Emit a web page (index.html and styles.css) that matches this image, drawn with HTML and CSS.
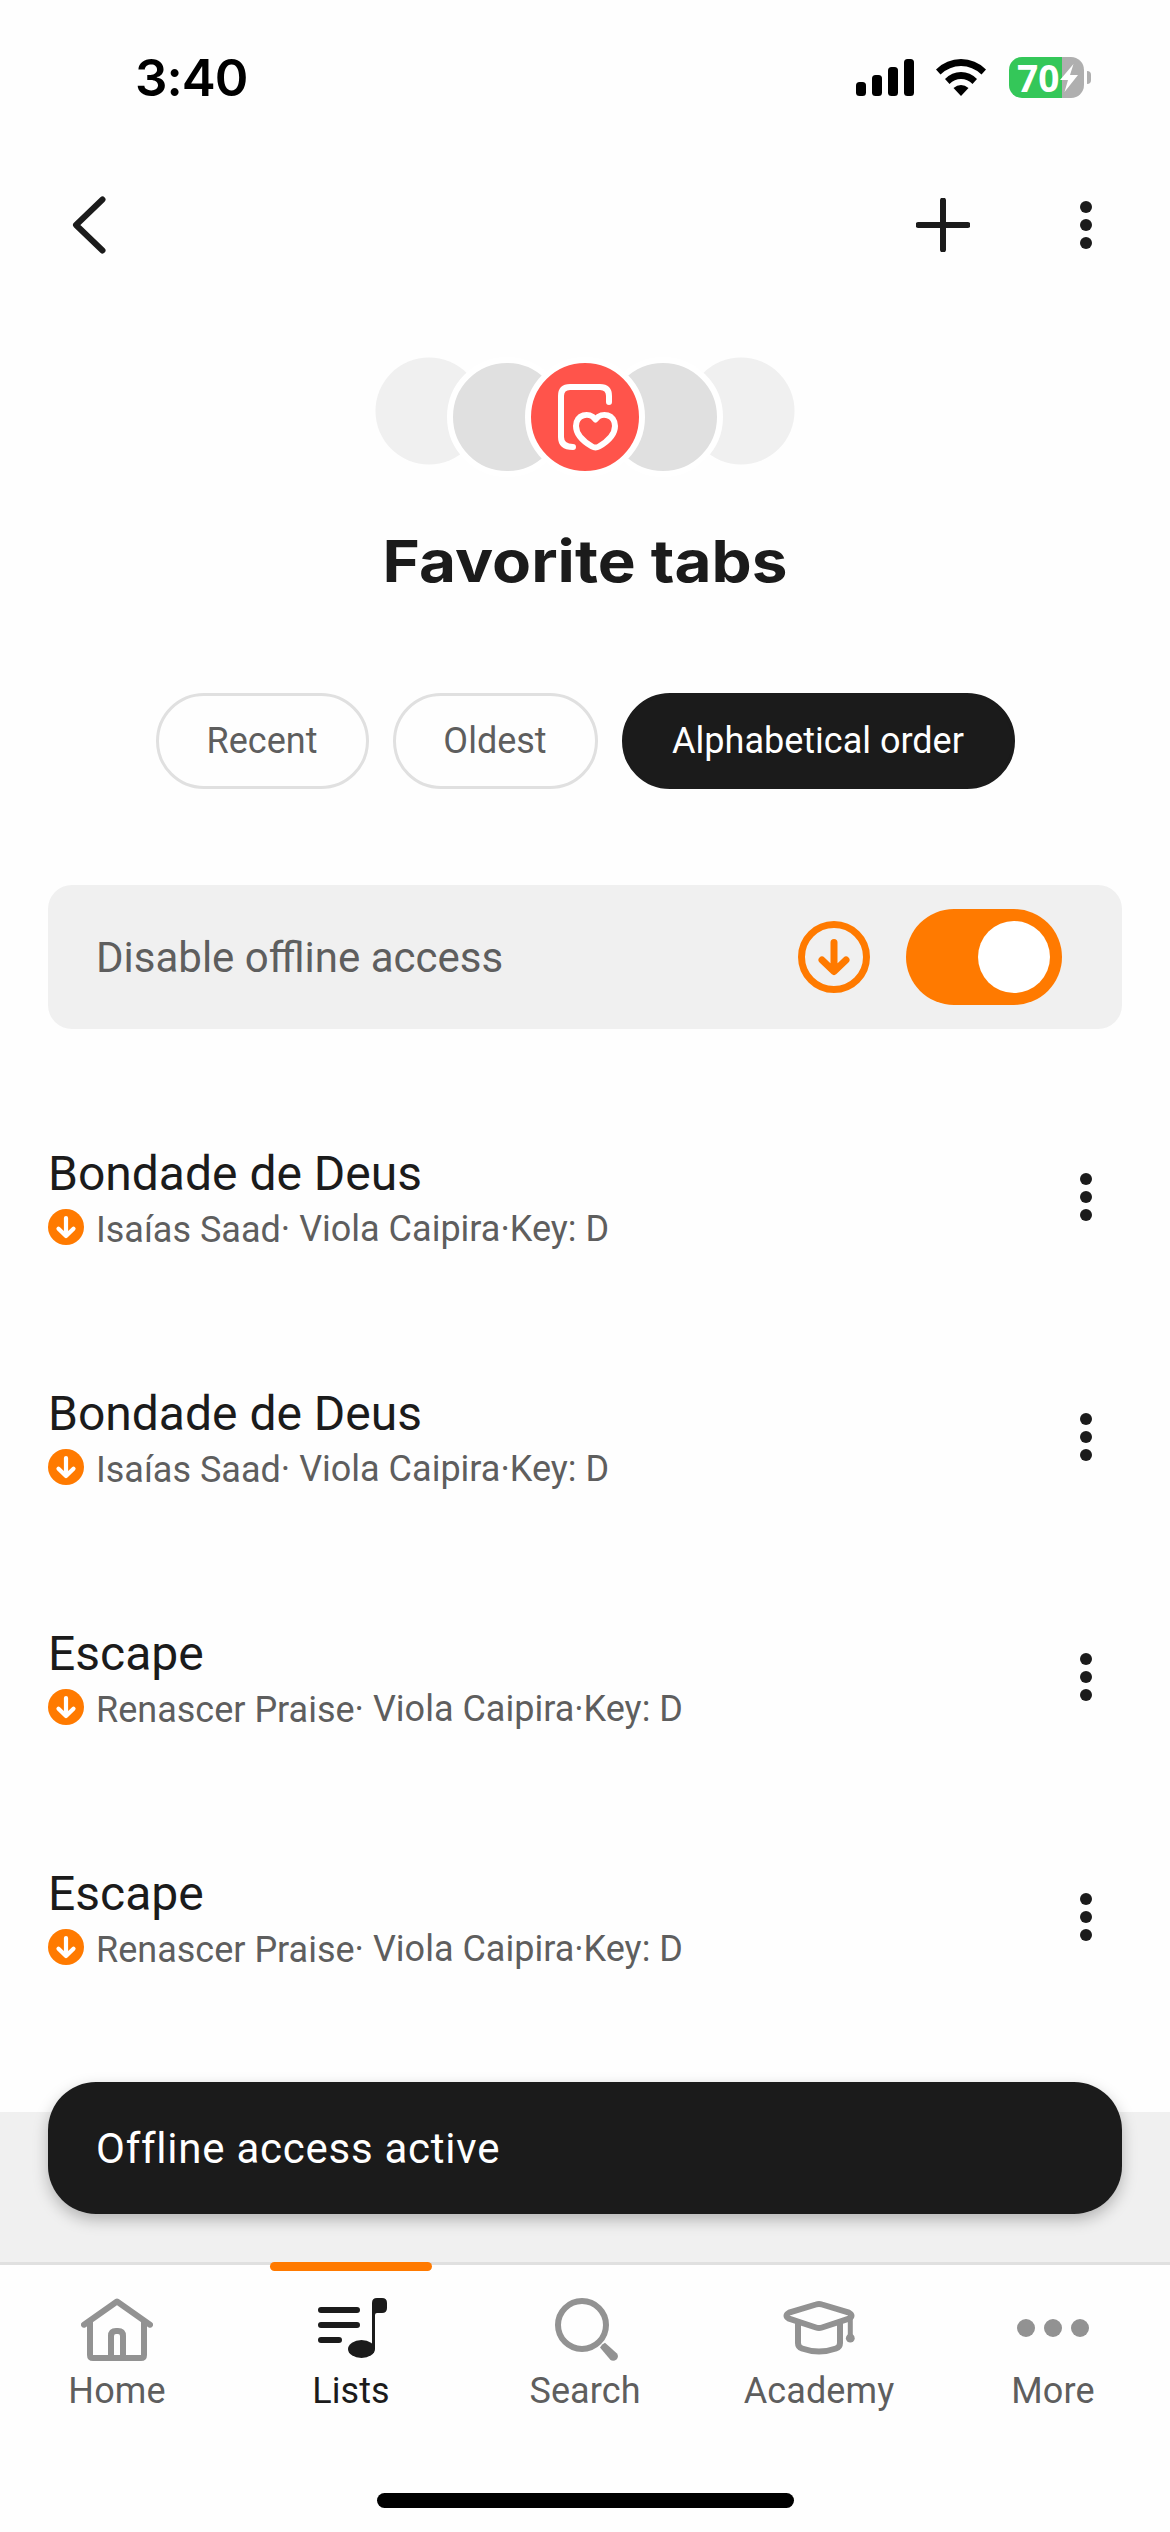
FILE: index.html
```
<!DOCTYPE html>
<html lang="en">
<head>
<meta charset="utf-8">
<title>Favorite tabs</title>
<link rel="stylesheet" href="styles.css">
</head>
<body>
<svg class="defs" aria-hidden="true">
  <symbol id="dots" viewBox="0 0 12 48"><circle cx="6" cy="6" r="6"/><circle cx="6" cy="24" r="6"/><circle cx="6" cy="42" r="6"/></symbol>
  <symbol id="saved" viewBox="0 0 36 36"><circle cx="18" cy="18" r="18" fill="#ff7a00"/><path d="M18 9V26.500M10.500 19.700 18 27l7.500-7.300" fill="none" stroke="#fff" stroke-width="4.200" stroke-linecap="round" stroke-linejoin="round"/></symbol>
</svg>
<header class="status">
  <span class="clock">3:40</span>
  <svg class="signal" viewBox="0 0 58 37"><rect y="23" width="10" height="14" rx="3.500"/><rect x="16" y="16" width="10" height="21" rx="3.500"/><rect x="32" y="8" width="10" height="29" rx="3.500"/><rect x="48" width="10" height="37" rx="3.500"/></svg>
  <svg class="wifi" viewBox="0 0 50 37"><path d="M0 10.500Q10.500 0 25 0T50 10.500L45.500 15.500Q36.500 7 25 7T4.500 15.500Z"/><path d="M9 20Q15.800 13 25 13T41 20L36.500 25Q31.500 20 25 20T13.500 25Z"/><path d="M17.500 29Q21 26 25 26T32.500 29L25 37Z"/></svg>
  <div class="battery"><span class="level">70</span><svg class="bolt" viewBox="0 0 18 28"><path d="M13.500 0 0 16H8L4.500 28 18 11H10Z"/></svg></div>
  <i class="cap"></i>
</header>
<nav class="toolbar">
  <svg class="back" viewBox="0 0 34 58"><path d="M30.500 3.500 4 29l26.500 25.500"/></svg>
  <svg class="plus" viewBox="0 0 54 54"><path d="M27 2.500v49M2.500 27h49"/></svg>
  <svg class="more"><use href="#dots"/></svg>
</nav>
<main>
  <svg class="badges" viewBox="0 0 420 120">
    <circle cx="54" cy="54" r="53.500" fill="#f0f0f0"/><circle cx="366" cy="54" r="53.500" fill="#f0f0f0"/>
    <g stroke="#fff" stroke-width="6"><circle cx="132" cy="60" r="57" fill="#e0e0e0"/><circle cx="288" cy="60" r="57" fill="#e0e0e0"/><circle cx="210" cy="60" r="57" fill="#ff544b"/></g>
    <g fill="none" stroke="#fff" stroke-width="6" stroke-linecap="round" stroke-linejoin="round"><path d="M234 45V39Q234 30 225 30H195Q186 30 186 39V80Q186 90 198 90"/><path d="M220.500 62.500C214 54 201 58 201 69C201 79 211 86 217 89.500Q220.500 91.500 224 89.500C230 86 240 79 240 69C240 58 227 54 220.500 62.500Z"/></g>
  </svg>
  <h1>Favorite tabs</h1>
  <div class="chips"><button class="chip recent">Recent</button><button class="chip oldest">Oldest</button><button class="chip active">Alphabetical order</button></div>
  <section class="offline">
    <span class="offline-text">Disable offline access</span>
    <svg class="download" viewBox="0 0 72 72"><circle cx="36" cy="36" r="32.500"/><path d="M36 21.500V50M24 39 36 50.500l12-11.500"/></svg>
    <span class="toggle"><i></i></span>
  </section>
  <ul class="songs">
    <li><div><h2>Bondade de Deus</h2><p><svg class="saved"><use href="#saved"/></svg><span class="artist">Isaías Saad</span><span class="meta">· Viola Caipira·Key: D</span></p></div><svg class="more"><use href="#dots"/></svg></li>
    <li><div><h2>Bondade de Deus</h2><p><svg class="saved"><use href="#saved"/></svg><span class="artist">Isaías Saad</span><span class="meta">· Viola Caipira·Key: D</span></p></div><svg class="more"><use href="#dots"/></svg></li>
    <li><div><h2>Escape</h2><p><svg class="saved"><use href="#saved"/></svg><span class="artist">Renascer Praise</span><span class="meta">· Viola Caipira·Key: D</span></p></div><svg class="more"><use href="#dots"/></svg></li>
    <li><div><h2>Escape</h2><p><svg class="saved"><use href="#saved"/></svg><span class="artist">Renascer Praise</span><span class="meta">· Viola Caipira·Key: D</span></p></div><svg class="more"><use href="#dots"/></svg></li>
  </ul>
</main>
<aside class="band"><div class="toast">Offline access active</div></aside>
<nav class="tabs">
  <a class="tab"><svg viewBox="0 0 72 72"><path d="M3 29.700 36 6.500l33 23.200M9 27v33q0 3 3 3h48q3 0 3-3V27M30 62V41q0-5 5-5h2q5 0 5 5v21"/></svg>Home</a>
  <a class="tab current"><svg viewBox="0 0 72 72"><path d="M6 15h36M6 30h36M6 45h18"/><g class="solid"><path d="M57 8q0-5 5-5h5q5 0 5 5v5q0 5-5 5h-5q-2 0-2 2V54h-3Z"/><ellipse cx="46.500" cy="54" rx="13.500" ry="9"/></g></svg>Lists</a>
  <a class="tab"><svg viewBox="0 0 72 72"><circle cx="33" cy="30" r="24"/><path class="solid" d="M51 52.500Q53 49 56 47.700L68 58.500Q70 61.500 67.800 64.200Q64.500 67 61.500 65Z"/></svg>Search</a>
  <a class="tab"><svg viewBox="0 0 72 72"><path d="M33 9.500q3-1 6 0l27 8.200q5 3 0 6L39 32.500q-3 1-6 0L6 23.700q-5-3 0-6ZM15 27v21q0 4 4 5.500 17 6 34 0 4-1.500 4-5.500V27"/><path d="M67.300 22v20" stroke-width="5"/><circle class="solid" cx="67.300" cy="43.200" r="4.400"/></svg>Academy</a>
  <a class="tab"><svg viewBox="0 0 72 72"><g class="solid"><circle cx="9" cy="33" r="9"/><circle cx="36" cy="33" r="9"/><circle cx="63" cy="33" r="9"/></g></svg>More</a>
</nav>
<footer class="home-bar"><i></i></footer>
</body>
</html>
```
FILE: styles.css
```
* { box-sizing: border-box; margin: 0; padding: 0; }
body { width: 1170px; height: 2532px; display: flex; flex-direction: column; overflow: hidden; background: #fefefe; color: #1b1b1b; font-family: Roboto, "Liberation Sans", sans-serif; }
svg { display: block; flex: none; }
.defs { width: 0; height: 0; position: absolute; }
.status { height: 141px; flex: none; display: flex; align-items: flex-start; padding: 57px 79px 0 135px; color: #000; }
.clock { font: 600 51px/42px Inter, sans-serif; width: 721px; letter-spacing: -1px; }
.signal { width: 58px; height: 37px; margin: 2px 22px 0 0; }
.wifi { width: 50px; height: 37px; margin: 2px 23px 0 0; }
.battery { width: 75px; height: 41px; border-radius: 13px; display: flex; align-items: center; padding-left: 8px; background: linear-gradient(90deg, #34c759 53px, #afafaf 53px); }
.level { font: 700 37px/41px "Noto Sans", sans-serif; color: #fff; width: 43px; }
.bolt { width: 18px; height: 28px; fill: #fff; }
.cap { width: 4px; height: 13px; margin: 14px 0 0 3px; background: #afafaf; border-radius: 0 6px 6px 0; }
.toolbar { height: 168px; flex: none; display: flex; align-items: center; padding: 0 78px 0 72px; }
.back, .plus { fill: none; stroke: #1b1b1b; stroke-width: 6; stroke-linecap: round; stroke-linejoin: round; }
.back { width: 34px; height: 58px; }
.plus { width: 54px; height: 54px; margin: 0 110px 0 auto; }
.more { width: 12px; height: 48px; fill: #1b1b1b; }
main { height: 1803px; flex: none; padding: 48px 48px 0; display: flex; flex-direction: column; align-items: center; }
.badges { width: 420px; height: 120px; }
h1 { font: 700 58px/72px Inter, sans-serif; margin-top: 48px; white-space: nowrap; transform: scaleX(1.1); }
.chips { display: flex; gap: 24px; margin-top: 96px; }
.chip { height: 96px; border: 3px solid #e0e0e0; border-radius: 48px; background: transparent; color: #5e5e5e; font: 400 36px/42px Roboto, sans-serif; white-space: nowrap; }
.recent { width: 213px; }
.oldest { width: 205px; }
.active { width: 393px; color: #fff; background: #1b1b1b; border-color: #1b1b1b; }
.offline { width: 1074px; height: 144px; margin-top: 96px; border-radius: 24px; background: #f0f0f0; display: flex; align-items: center; padding: 0 60px 0 48px; }
.offline-text { font-size: 42px; color: #5e5e5e; }
.download { width: 72px; height: 72px; margin: 0 36px 0 auto; fill: none; stroke: #ff7a00; stroke-width: 7; stroke-linecap: round; stroke-linejoin: round; }
.toggle { width: 156px; height: 96px; border-radius: 48px; padding: 12px; background: #ff7a00; display: flex; justify-content: flex-end; }
.toggle i { width: 72px; height: 72px; border-radius: 50%; background: #fff; }
.songs { list-style: none; width: 1074px; margin-top: 48px; }
.songs li { height: 240px; display: flex; align-items: center; justify-content: space-between; padding-right: 30px; }
h2 { font-weight: 400; font-size: 48px; line-height: 62px; margin-bottom: -2px; }
.songs p { display: flex; align-items: center; height: 48px; font-size: 36px; line-height: 44px; color: #5e5e5e; white-space: pre; }
.artist { margin-top: 5px; }
.meta { margin-top: 3px; }
.saved { width: 36px; height: 36px; margin-right: 12px; }
.band { height: 150px; flex: none; background: #f0f0f0; padding: 0 48px; }
.toast { height: 132px; margin-top: -30px; border-radius: 48px; padding-left: 48px; background: #1b1b1b; color: #fff; font-size: 42px; line-height: 134px; letter-spacing: .75px; box-shadow: 0 6px 15px rgba(0,0,0,.25); }
.tabs { height: 195px; flex: none; display: grid; grid-template-columns: repeat(5, 1fr); border-top: 3px solid #e0e0e0; }
.tab { position: relative; display: flex; flex-direction: column; align-items: center; padding-top: 30px; color: #5e5e5e; font-size: 36px; line-height: 42px; letter-spacing: .1px; }
.tab svg { width: 72px; height: 72px; margin-bottom: 3px; fill: none; stroke: #929292; stroke-width: 6; stroke-linecap: round; stroke-linejoin: round; }
.tab .solid { fill: #929292; stroke: none; }
.current { color: #1b1b1b; }
.current svg { stroke: #1b1b1b; }
.current .solid { fill: #1b1b1b; }
.current::before { content: ""; position: absolute; top: -3px; width: 162px; height: 9px; border-radius: 4.500px; background: #ff7a00; }
.home-bar { padding: 36px 0 0 377px; }
.home-bar i { display: block; width: 417px; height: 15px; border-radius: 8px; background: #000; }
```
